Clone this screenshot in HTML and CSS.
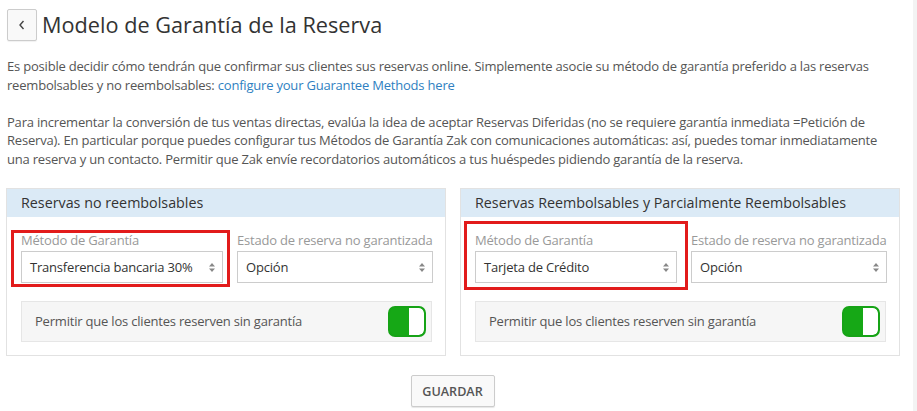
FILE: index.html
```html
<!DOCTYPE html>
<html lang="es">
<head>
<meta charset="utf-8">
<title>Modelo de Garantía de la Reserva</title>
<link rel="stylesheet" href="styles.css">
</head>
<body>
<div class="shell">
  <main class="page">
    <div class="header">
      <button class="back" type="button" aria-label="Volver">
        <svg width="8" height="10" viewBox="0 0 8 10"><path d="M5.5 1 L2 5 L5.5 9" fill="none" stroke="#444" stroke-width="1.4"/></svg>
      </button>
      <h1 class="title">Modelo de Garantía de la Reserva</h1>
    </div>

    <div class="intro">
      Es posible decidir cómo tendrán que confirmar sus clientes sus reservas online. Simplemente asocie su método de garantía preferido a las reservas reembolsables y no reembolsables: <a class="link" href="#">configure your Guarantee Methods here</a><br><br>
      Para incrementar la conversión de tus ventas directas, evalúa la idea de aceptar Reservas Diferidas (no se requiere garantía inmediata =Petición de Reserva). En particular porque puedes configurar tus Métodos de Garantía Zak con comunicaciones automáticas: así, puedes tomar inmediatamente una reserva y un contacto. Permitir que Zak envíe recordatorios automáticos a tus huéspedes pidiendo garantía de la reserva.
    </div>

    <div class="panels">
      <section class="panel">
        <div class="panel-head">Reservas no reembolsables</div>
        <div class="panel-body">
          <div class="fields">
            <div class="field">
              <div class="label">Método de Garantía</div>
              <div class="select"><span>Transferencia bancaria 30%</span>
                <svg class="arrows" width="6" height="9" viewBox="0 0 6 9"><path d="M3 0 L6 3.5 L0 3.5 Z M3 9 L6 5.5 L0 5.5 Z" fill="#888"/></svg>
              </div>
              <div class="mark mark-left"></div>
            </div>
            <div class="field">
              <div class="label">Estado de reserva no garantizada</div>
              <div class="select"><span>Opción</span>
                <svg class="arrows" width="6" height="9" viewBox="0 0 6 9"><path d="M3 0 L6 3.5 L0 3.5 Z M3 9 L6 5.5 L0 5.5 Z" fill="#888"/></svg>
              </div>
            </div>
          </div>
          <div class="allow">
            <span>Permitir que los clientes reserven sin garantía</span>
            <span class="switch"><span class="knob"></span></span>
          </div>
        </div>
      </section>

      <section class="panel">
        <div class="panel-head">Reservas Reembolsables y Parcialmente Reembolsables</div>
        <div class="panel-body">
          <div class="fields">
            <div class="field">
              <div class="label">Método de Garantía</div>
              <div class="select"><span>Tarjeta de Crédito</span>
                <svg class="arrows" width="6" height="9" viewBox="0 0 6 9"><path d="M3 0 L6 3.5 L0 3.5 Z M3 9 L6 5.5 L0 5.5 Z" fill="#888"/></svg>
              </div>
              <div class="mark mark-right"></div>
            </div>
            <div class="field">
              <div class="label">Estado de reserva no garantizada</div>
              <div class="select"><span>Opción</span>
                <svg class="arrows" width="6" height="9" viewBox="0 0 6 9"><path d="M3 0 L6 3.5 L0 3.5 Z M3 9 L6 5.5 L0 5.5 Z" fill="#888"/></svg>
              </div>
            </div>
          </div>
          <div class="allow">
            <span>Permitir que los clientes reserven sin garantía</span>
            <span class="switch"><span class="knob"></span></span>
          </div>
        </div>
      </section>
    </div>

    <div class="actions">
      <button class="save" type="button">GUARDAR</button>
    </div>
  </main>
  <div class="edge"></div>
</div>
</body>
</html>
```

FILE: styles.css
```css
* { box-sizing: border-box; }

html, body {
  margin: 0;
  padding: 0;
  background: #fff;
}

body {
  font-family: "Open Sans", "Noto Sans", sans-serif;
  font-size: 13px;
  line-height: 18.5px;
  letter-spacing: -0.2px;
  color: #555;
}

.shell {
  display: flex;
  justify-content: space-between;
  min-height: 100vh;
}

.page {
  width: 906px;
  padding: 0 7px 0 6px;
}

.edge {
  width: 4px;
  background: #f3f3f3;
}

.header {
  display: flex;
  align-items: center;
  gap: 5px;
  margin-top: 9px;
  padding-left: 1px;
}

.back {
  width: 30px;
  height: 32px;
  padding: 0;
  border: 1px solid #ccc;
  border-radius: 2px;
  background: #f9f9f9;
  display: flex;
  align-items: center;
  justify-content: center;
  box-shadow: 0 1px 1px rgba(0,0,0,0.06);
}

.title {
  margin: 0;
  font-size: 21.7px;
  font-weight: 400;
  letter-spacing: 0;
  line-height: 32px;
  color: #333;
}

.intro {
  margin-top: 16px;
  padding-left: 1px;
}

.link {
  color: #2f7fc1;
  text-decoration: none;
}

.panels {
  display: grid;
  grid-template-columns: 440px 440px;
  gap: 14px;
  margin-top: 20px;
}

.panel {
  border: 1px solid #e2e2e2;
  background: #fff;
}

.panel-head {
  height: 28px;
  line-height: 28px;
  padding: 0 14px;
  background: #dbeaf6;
  font-size: 14.3px;
  letter-spacing: 0;
  color: #333;
}

.panel-body {
  padding: 14px 13px 13px 14px;
}

.fields {
  display: grid;
  grid-template-columns: 202px 1fr;
  gap: 14px;
}

.field {
  position: relative;
}

.label {
  color: #999;
  white-space: nowrap;
  height: 19px;
  margin-bottom: 1px;
}

.select {
  height: 32px;
  border: 1px solid #ccc;
  background: #fff;
  display: flex;
  align-items: center;
  justify-content: space-between;
  padding: 0 7px 0 8px;
  color: #333;
}

.arrows { display: block; }

.mark {
  position: absolute;
  border: 3px solid #e21b1b;
  pointer-events: none;
}

.mark-left {
  left: -10px;
  right: -7px;
  top: -1px;
  bottom: -4px;
}

.mark-right {
  left: -11px;
  right: -11px;
  top: -10px;
  bottom: -7px;
}

.allow {
  margin-top: 18px;
  height: 41px;
  border: 1px solid #e6e6e6;
  background: #f6f6f6;
  display: flex;
  align-items: center;
  justify-content: space-between;
  padding: 0 5px 0 13px;
  color: #555;
}

.switch {
  width: 38px;
  height: 31px;
  border: 2px solid #16a316;
  border-radius: 7px;
  background: #16a816;
  display: flex;
  justify-content: flex-end;
  overflow: hidden;
}

.knob {
  width: 15px;
  height: 100%;
  background: #fff;
  border-radius: 0 5px 5px 0;
}

.actions {
  display: flex;
  justify-content: center;
  margin-top: 19px;
}

.save {
  width: 84px;
  height: 32px;
  border: 1px solid #ccc;
  border-radius: 2px;
  background: #f9f9f9;
  font-family: "Open Sans", "Noto Sans", sans-serif;
  font-size: 12.6px;
  font-weight: 600;
  letter-spacing: 0;
  color: #555;
  box-shadow: 0 1px 1px rgba(0,0,0,0.1);
  padding: 0;
}
```
